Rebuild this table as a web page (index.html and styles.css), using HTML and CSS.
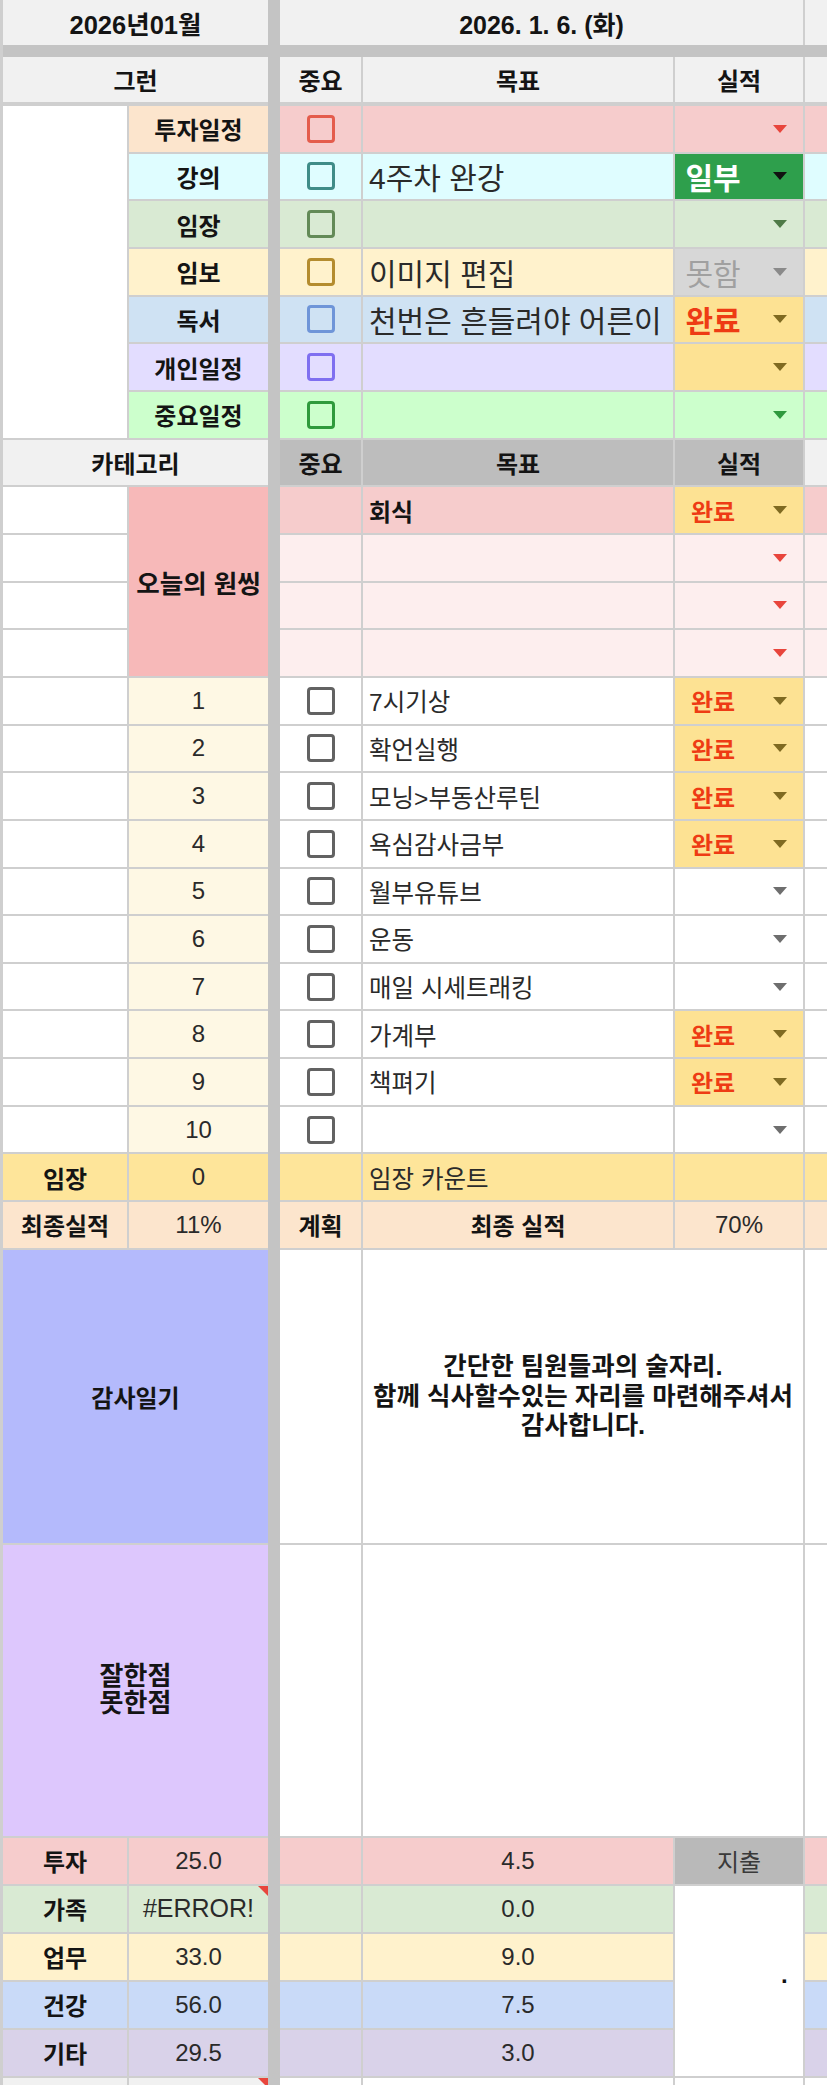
FILE: index.html
```html
<!DOCTYPE html>
<html lang="ko">
<head>
<meta charset="utf-8">
<title>2026년01월</title>
<link rel="stylesheet" href="styles.css">
</head>
<body>
<div class="sheet">
  <div class="vsep"></div>
  <div class="hsep"></div>

  <!-- header -->
  <div class="c hd b s2 title">2026년01월</div>
  <div class="c hd b s3 title2">2026. 1. 6. (화)</div>
  <div class="c hd b"></div>

  <!-- 그런 row -->
  <div class="c hd b s2 hdrow">그런</div>
  <div class="c hd b hdrow">중요</div>
  <div class="c hd b hdrow">목표</div>
  <div class="c hd b hdrow">실적</div>
  <div class="c hd b hdrow"></div>

  <!-- 투자일정 -->
  <div class="c white r7"></div>
  <div class="c b bg-peach">투자일정</div>
  <div class="c bg-pink"><span class="cb k-red"></span></div>
  <div class="c l bg-pink"></div>
  <div class="c dd bg-pink"><i class="arr a-red"></i></div>
  <div class="c bg-pink"></div>

  <!-- 강의 -->
  <div class="c b bg-cyan">강의</div>
  <div class="c bg-cyan"><span class="cb k-teal"></span></div>
  <div class="c l bg-cyan big">4주차 완강</div>
  <div class="c dd bg-green"><span class="v big b wht">일부</span><i class="arr a-blk"></i></div>
  <div class="c bg-cyan"></div>

  <!-- 임장 -->
  <div class="c b bg-sage">임장</div>
  <div class="c bg-sage"><span class="cb k-sage"></span></div>
  <div class="c l bg-sage"></div>
  <div class="c dd bg-sage"><i class="arr a-dg"></i></div>
  <div class="c bg-sage"></div>

  <!-- 임보 -->
  <div class="c b bg-yel">임보</div>
  <div class="c bg-yel"><span class="cb k-gold"></span></div>
  <div class="c l bg-yel big">이미지 편집</div>
  <div class="c dd bg-gray"><span class="v big gry">못함</span><i class="arr a-gr"></i></div>
  <div class="c bg-yel"></div>

  <!-- 독서 -->
  <div class="c b bg-blue">독서</div>
  <div class="c bg-blue"><span class="cb k-blue"></span></div>
  <div class="c l bg-blue big">천번은 흔들려야 어른이</div>
  <div class="c dd bg-done"><span class="v big b red">완료</span><i class="arr a-br"></i></div>
  <div class="c bg-blue"></div>

  <!-- 개인일정 -->
  <div class="c b bg-lav">개인일정</div>
  <div class="c bg-lav"><span class="cb k-purp"></span></div>
  <div class="c l bg-lav"></div>
  <div class="c dd bg-done"><i class="arr a-br"></i></div>
  <div class="c bg-lav"></div>

  <!-- 중요일정 -->
  <div class="c b bg-mint">중요일정</div>
  <div class="c bg-mint"><span class="cb k-green"></span></div>
  <div class="c l bg-mint"></div>
  <div class="c dd bg-mint"><i class="arr a-g"></i></div>
  <div class="c bg-mint"></div>

  <!-- 카테고리 header -->
  <div class="c hd b s2">카테고리</div>
  <div class="c hd2 b">중요</div>
  <div class="c hd2 b">목표</div>
  <div class="c hd2 b">실적</div>
  <div class="c hd b"></div>

  <!-- 오늘의 원씽 -->
  <div class="c white"></div>
  <div class="c b bg-rose r4 onething">오늘의 원씽</div>
  <div class="c bg-pink"></div>
  <div class="c l b bg-pink">회식</div>
  <div class="c dd bg-done"><span class="v b red">완료</span><i class="arr a-br"></i></div>
  <div class="c bg-pink"></div>

  <div class="c white"></div>
  <div class="c bg-blush"></div>
  <div class="c l bg-blush"></div>
  <div class="c dd bg-blush"><i class="arr a-red"></i></div>
  <div class="c bg-blush"></div>

  <div class="c white"></div>
  <div class="c bg-blush"></div>
  <div class="c l bg-blush"></div>
  <div class="c dd bg-blush"><i class="arr a-red"></i></div>
  <div class="c bg-blush"></div>

  <div class="c white"></div>
  <div class="c bg-blush"></div>
  <div class="c l bg-blush"></div>
  <div class="c dd bg-blush"><i class="arr a-red"></i></div>
  <div class="c bg-blush"></div>

  <!-- numbered 1-10 -->
  <div class="c white"></div>
  <div class="c bg-cream">1</div>
  <div class="c white"><span class="cb k-gray"></span></div>
  <div class="c l white task">7시기상</div>
  <div class="c dd bg-done"><span class="v b red">완료</span><i class="arr a-br"></i></div>
  <div class="c white"></div>

  <div class="c white"></div>
  <div class="c bg-cream">2</div>
  <div class="c white"><span class="cb k-gray"></span></div>
  <div class="c l white task">확언실행</div>
  <div class="c dd bg-done"><span class="v b red">완료</span><i class="arr a-br"></i></div>
  <div class="c white"></div>

  <div class="c white"></div>
  <div class="c bg-cream">3</div>
  <div class="c white"><span class="cb k-gray"></span></div>
  <div class="c l white task">모닝&gt;부동산루틴</div>
  <div class="c dd bg-done"><span class="v b red">완료</span><i class="arr a-br"></i></div>
  <div class="c white"></div>

  <div class="c white"></div>
  <div class="c bg-cream">4</div>
  <div class="c white"><span class="cb k-gray"></span></div>
  <div class="c l white task">욕심감사금부</div>
  <div class="c dd bg-done"><span class="v b red">완료</span><i class="arr a-br"></i></div>
  <div class="c white"></div>

  <div class="c white"></div>
  <div class="c bg-cream">5</div>
  <div class="c white"><span class="cb k-gray"></span></div>
  <div class="c l white task">월부유튜브</div>
  <div class="c dd white"><i class="arr a-gr2"></i></div>
  <div class="c white"></div>

  <div class="c white"></div>
  <div class="c bg-cream">6</div>
  <div class="c white"><span class="cb k-gray"></span></div>
  <div class="c l white task">운동</div>
  <div class="c dd white"><i class="arr a-gr2"></i></div>
  <div class="c white"></div>

  <div class="c white"></div>
  <div class="c bg-cream">7</div>
  <div class="c white"><span class="cb k-gray"></span></div>
  <div class="c l white task">매일 시세트래킹</div>
  <div class="c dd white"><i class="arr a-gr2"></i></div>
  <div class="c white"></div>

  <div class="c white"></div>
  <div class="c bg-cream">8</div>
  <div class="c white"><span class="cb k-gray"></span></div>
  <div class="c l white task">가계부</div>
  <div class="c dd bg-done"><span class="v b red">완료</span><i class="arr a-br"></i></div>
  <div class="c white"></div>

  <div class="c white"></div>
  <div class="c bg-cream">9</div>
  <div class="c white"><span class="cb k-gray"></span></div>
  <div class="c l white task">책펴기</div>
  <div class="c dd bg-done"><span class="v b red">완료</span><i class="arr a-br"></i></div>
  <div class="c white"></div>

  <div class="c white"></div>
  <div class="c bg-cream">10</div>
  <div class="c white"><span class="cb k-gray"></span></div>
  <div class="c l white"></div>
  <div class="c dd white"><i class="arr a-gr2"></i></div>
  <div class="c white"></div>

  <!-- 임장 count -->
  <div class="c b bg-gold">임장</div>
  <div class="c bg-gold">0</div>
  <div class="c bg-gold"></div>
  <div class="c l bg-gold task">임장 카운트</div>
  <div class="c bg-gold"></div>
  <div class="c bg-gold"></div>

  <!-- 최종실적 -->
  <div class="c b bg-peach">최종실적</div>
  <div class="c bg-peach">11%</div>
  <div class="c b bg-peach">계획</div>
  <div class="c b bg-peach">최종 실적</div>
  <div class="c bg-peach">70%</div>
  <div class="c bg-peach"></div>

  <!-- 감사일기 -->
  <div class="c b bg-peri s2">감사일기</div>
  <div class="c white"></div>
  <div class="c b white s2 note">간단한 팀원들과의 술자리.<br>함께 식사할수있는 자리를 마련해주셔서<br>감사합니다.</div>
  <div class="c white"></div>

  <!-- 잘한점 못한점 -->
  <div class="c b bg-lilac s2 note2">잘한점<br>못한점</div>
  <div class="c white"></div>
  <div class="c white s2"></div>
  <div class="c white"></div>

  <!-- 투자 -->
  <div class="c b bg-pink">투자</div>
  <div class="c bg-pink">25.0</div>
  <div class="c bg-pink"></div>
  <div class="c bg-pink">4.5</div>
  <div class="c bg-spend">지출</div>
  <div class="c bg-pink"></div>

  <!-- 가족 -->
  <div class="c b bg-sage">가족</div>
  <div class="c bg-sage corner err">#ERROR!</div>
  <div class="c bg-sage"></div>
  <div class="c bg-sage">0.0</div>
  <div class="c white r4 dot">·</div>
  <div class="c bg-sage"></div>

  <!-- 업무 -->
  <div class="c b bg-yel">업무</div>
  <div class="c bg-yel">33.0</div>
  <div class="c bg-yel"></div>
  <div class="c bg-yel">9.0</div>
  <div class="c bg-yel"></div>

  <!-- 건강 -->
  <div class="c b bg-sky">건강</div>
  <div class="c bg-sky">56.0</div>
  <div class="c bg-sky"></div>
  <div class="c bg-sky">7.5</div>
  <div class="c bg-sky"></div>

  <!-- 기타 -->
  <div class="c b bg-grape">기타</div>
  <div class="c bg-grape">29.5</div>
  <div class="c bg-grape"></div>
  <div class="c bg-grape">3.0</div>
  <div class="c bg-grape"></div>

  <!-- partial bottom row -->
  <div class="c hd"></div>
  <div class="c hd corner"></div>
  <div class="c white"></div>
  <div class="c white"></div>
  <div class="c white"></div>
  <div class="c white"></div>
</div>
</body>
</html>
```

FILE: styles.css
```css
* { box-sizing: border-box; }

html, body {
  margin: 0;
  padding: 0;
}

body {
  width: 827px;
  height: 2087px;
  overflow: hidden;
  background: #ffffff;
  font-family: "Liberation Sans", "Noto Sans CJK KR", sans-serif;
  font-size: 24px;
  color: #2a2a2a;
}

.sheet {
  display: grid;
  grid-template-columns: 124px 139px 8px 81px 310px 128px 22px;
  grid-template-rows: 45px 8px 47px repeat(24, 45.67px) 293px 291px repeat(5, 46px) 7px;
  gap: 2px;
  padding-left: 3px;
  background: #cfcfcf;
  width: 827px;
}

.vsep {
  grid-column: 3;
  grid-row: 1 / -1;
  margin: 0 -2px;
  background: #c4c4c4;
}

.hsep {
  grid-column: 1 / -1;
  grid-row: 2;
  margin: -2px 0;
  background: #c4c4c4;
}

.c {
  display: flex;
  align-items: center;
  justify-content: center;
  overflow: hidden;
  white-space: nowrap;
  min-width: 0;
  position: relative;
}

.l { justify-content: flex-start; padding-left: 6px; }
.b { font-weight: 700; color: #141414; }
.big { font-size: 30px; }
.title { font-size: 25.5px; }
.title2 { font-size: 25px; }
.onething { font-size: 25.5px; }
.task { font-size: 24.5px; }
.err { font-size: 25px; }

.s2 { grid-column: span 2; }
.s3 { grid-column: span 3; }
.r4 { grid-row: span 4; }
.r7 { grid-row: span 7; }

.hdrow { border-bottom: 2px solid #cfcfcf; }

/* backgrounds */
.white { background: #ffffff; }
.hd { background: #f1f1f1; }
.hd2 { background: #bdbdbd; }
.bg-peach { background: #fce5cd; }
.bg-pink { background: #f6cccc; }
.bg-cyan { background: #dffdff; }
.bg-sage { background: #d9ead3; }
.bg-yel { background: #fff2cc; }
.bg-blue { background: #cfe2f3; }
.bg-lav { background: #e3ddff; }
.bg-mint { background: #ccffcc; }
.bg-rose { background: #f7b9b9; }
.bg-blush { background: #fdeeee; }
.bg-cream { background: #fef8e4; }
.bg-done { background: #fde293; }
.bg-green { background: #2e9f4c; }
.bg-gray { background: #d7d7d7; }
.bg-gold { background: #fee59a; }
.bg-peri { background: #b4bafc; }
.bg-lilac { background: #ddc7fd; }
.bg-spend { background: #b9b9b9; color: #3a3a3a; }
.bg-sky { background: #c9daf8; }
.bg-grape { background: #d9d2e9; }

/* text colours */
.red { color: #ee3b14; }
.wht { color: #ffffff; }
.gry { color: #a0a0a0; }

/* checkbox */
.cb {
  width: 28px;
  height: 28px;
  border: 3px solid #666666;
  border-radius: 4px;
}
.k-red { border-color: #e45c4c; }
.k-teal { border-color: #3f8c88; }
.k-sage { border-color: #638a57; }
.k-gold { border-color: #b48c2e; }
.k-blue { border-color: #6f95d8; }
.k-purp { border-color: #7f6ff0; }
.k-green { border-color: #2f9a3c; }
.k-gray { border-color: #626262; }

/* dropdown chip */
.dd {
  justify-content: flex-end;
  padding-right: 16px;
}
.dd .v {
  flex: 1;
  text-align: center;
  margin-right: 22px;
}
.arr {
  display: block;
  width: 0;
  height: 0;
  border-left: 7px solid transparent;
  border-right: 7px solid transparent;
  border-top: 8px solid #777777;
}
.a-red { border-top-color: #e8453c; }
.a-blk { border-top-color: #111111; }
.a-dg { border-top-color: #4f7a47; }
.a-gr { border-top-color: #8a8a8a; }
.a-gr2 { border-top-color: #6e6e6e; }
.a-br { border-top-color: #7f6a21; }
.a-g { border-top-color: #2f9a3e; }

/* notes */
.note {
  white-space: normal;
  text-align: center;
  line-height: 29.5px;
  font-size: 25.5px;
}
.note2 {
  white-space: normal;
  text-align: center;
  line-height: 27px;
  font-size: 26px;
}

.dot {
  justify-content: flex-end;
  padding-right: 14px;
  font-weight: 700;
  color: #111;
}

/* error / comment corner marker */
.corner::after {
  content: "";
  position: absolute;
  top: 0;
  right: 0;
  width: 0;
  height: 0;
  border-top: 10px solid #e8453c;
  border-left: 10px solid transparent;
}
```
